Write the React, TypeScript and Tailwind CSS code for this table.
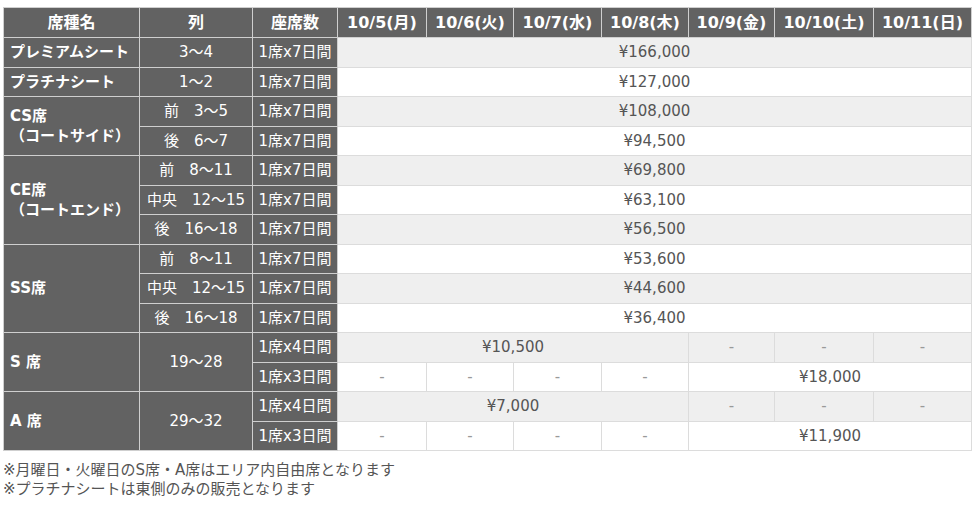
import React from "react";

const dark = "bg-[#626262] text-white border border-[#cfcfcf]";
const body = "border border-[#dcdcdc] text-[#555] text-center";

type PriceRow = { label?: React.ReactNode; labelSpan?: number; retsu?: React.ReactNode; retsuSpan?: number; seats: string; cells: React.ReactNode; light: boolean };

function Dash() {
  return <span className="text-[#999]">-</span>;
}

export default function App() {
  const dash = (light: boolean, k: number) => (
    <td key={k} className={`${body} ${light ? "bg-[#efefef]" : "bg-white"}`}>
      <Dash />
    </td>
  );
  const full = (p: string, light: boolean) => (
    <td colSpan={7} className={`${body} ${light ? "bg-[#efefef]" : "bg-white"}`}>{p}</td>
  );

  const rows: PriceRow[] = [
    { label: "プレミアムシート", labelSpan: 1, retsu: "3〜4", retsuSpan: 1, seats: "1席x7日間", cells: full("¥166,000", true), light: true },
    { label: "プラチナシート", labelSpan: 1, retsu: "1〜2", retsuSpan: 1, seats: "1席x7日間", cells: full("¥127,000", false), light: false },
    { label: (<>CS席<br />（コートサイド）</>), labelSpan: 2, retsu: "前　3〜5", retsuSpan: 1, seats: "1席x7日間", cells: full("¥108,000", true), light: true },
    { retsu: "後　6〜7", retsuSpan: 1, seats: "1席x7日間", cells: full("¥94,500", false), light: false },
    { label: (<>CE席<br />（コートエンド）</>), labelSpan: 3, retsu: "前　8〜11", retsuSpan: 1, seats: "1席x7日間", cells: full("¥69,800", true), light: true },
    { retsu: "中央　12〜15", retsuSpan: 1, seats: "1席x7日間", cells: full("¥63,100", false), light: false },
    { retsu: "後　16〜18", retsuSpan: 1, seats: "1席x7日間", cells: full("¥56,500", true), light: true },
    { label: "SS席", labelSpan: 3, retsu: "前　8〜11", retsuSpan: 1, seats: "1席x7日間", cells: full("¥53,600", false), light: false },
    { retsu: "中央　12〜15", retsuSpan: 1, seats: "1席x7日間", cells: full("¥44,600", true), light: true },
    { retsu: "後　16〜18", retsuSpan: 1, seats: "1席x7日間", cells: full("¥36,400", false), light: false },
    {
      label: "S 席", labelSpan: 2, retsu: "19〜28", retsuSpan: 2, seats: "1席x4日間", light: true,
      cells: (<><td colSpan={4} className={`${body} bg-[#efefef]`}>¥10,500</td>{[0, 1, 2].map((k) => dash(true, k))}</>),
    },
    {
      seats: "1席x3日間", light: false,
      cells: (<>{[0, 1, 2, 3].map((k) => dash(false, k))}<td colSpan={3} className={`${body} bg-white`}>¥18,000</td></>),
    },
    {
      label: "A 席", labelSpan: 2, retsu: "29〜32", retsuSpan: 2, seats: "1席x4日間", light: true,
      cells: (<><td colSpan={4} className={`${body} bg-[#efefef]`}>¥7,000</td>{[0, 1, 2].map((k) => dash(true, k))}</>),
    },
    {
      seats: "1席x3日間", light: false,
      cells: (<>{[0, 1, 2, 3].map((k) => dash(false, k))}<td colSpan={3} className={`${body} bg-white`}>¥11,900</td></>),
    },
  ];

  const days = ["10/5(月)", "10/6(火)", "10/7(水)", "10/8(木)", "10/9(金)", "10/10(土)", "10/11(日)"];

  return (
    <div className="bg-white min-h-[505px] pl-[3px] pt-[7px] text-[15px] leading-[20px]" style={{ fontFamily: '"DejaVu Sans", "Noto Sans CJK JP", sans-serif' }}>
      <table className="border-collapse table-fixed w-[968px]">
        <colgroup>
          <col className="w-[136px]" />
          <col className="w-[113px]" />
          <col className="w-[85px]" />
          <col className="w-[89px]" />
          <col className="w-[87px]" />
          <col className="w-[88px]" />
          <col className="w-[87px]" />
          <col className="w-[86px]" />
          <col className="w-[99px]" />
          <col className="w-[98px]" />
        </colgroup>
        <thead>
          <tr className="h-[30px]">
            <th className={`${dark} font-bold text-[16px]`}>席種名</th>
            <th className={`${dark} font-bold text-[16px]`}>列</th>
            <th className={`${dark} font-bold text-[16px]`}>座席数</th>
            {days.map((d) => (
              <th key={d} className={`${dark} font-bold text-[16px] whitespace-nowrap`}>{d}</th>
            ))}
          </tr>
        </thead>
        <tbody>
          {rows.map((r, i) => (
            <tr key={i} className="h-[29.5px]">
              {r.label !== undefined && (
                <td rowSpan={r.labelSpan} className={`${dark} font-bold text-left pl-[6px]`}>{r.label}</td>
              )}
              {r.retsu !== undefined && (
                <td rowSpan={r.retsuSpan} className={`${dark} text-center whitespace-nowrap`}>{r.retsu}</td>
              )}
              <td className={`${dark} text-center whitespace-nowrap`}>{r.seats}</td>
              {r.cells}
            </tr>
          ))}
        </tbody>
      </table>
      <div className="mt-[10px] text-[15px] leading-[19px] text-[#555]">
        <p>※月曜日・火曜日のS席・A席はエリア内自由席となります</p>
        <p>※プラチナシートは東側のみの販売となります</p>
      </div>
    </div>
  );
}
